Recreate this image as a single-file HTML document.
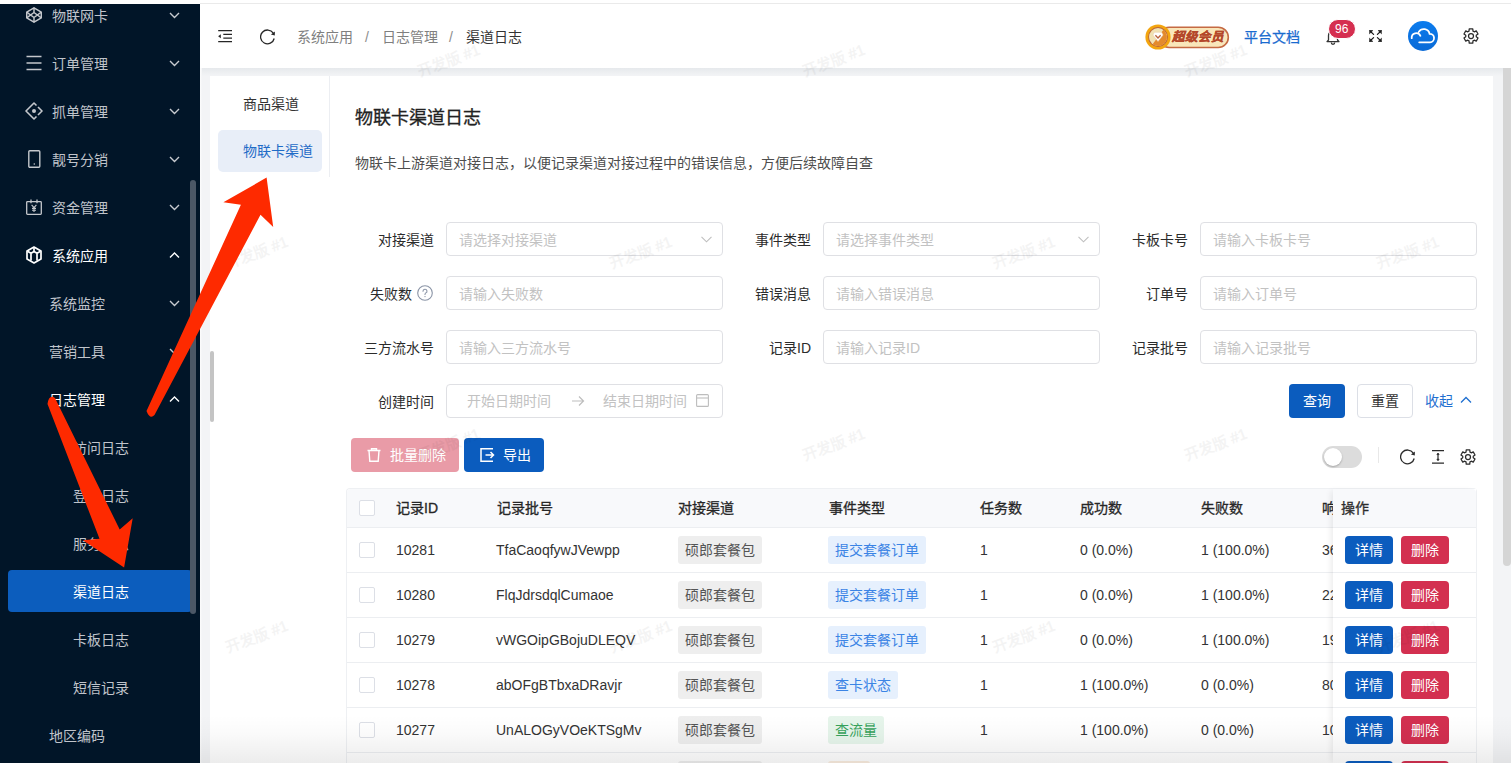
<!DOCTYPE html><html lang="zh-CN"><head><meta charset="utf-8"><style>
*{box-sizing:border-box;margin:0;padding:0}
html,body{width:1511px;height:763px;overflow:hidden;background:#f3f4f6;font-family:"Liberation Sans",sans-serif;font-size:14px;color:#262626}
.abs{position:absolute}
.st{position:absolute;line-height:50px;height:48px;white-space:nowrap;font-size:14px}
.ic{position:absolute}
.lbl{position:absolute;text-align:right;width:100px;line-height:37px;color:#2b2b2b;white-space:nowrap}
.inp{position:absolute;width:277px;height:34px;border:1px solid #dfe0e4;border-radius:4px;background:#fff;color:#c2c2c2;line-height:35px;padding-left:12px;white-space:nowrap}
.btn{position:absolute;border-radius:4px;text-align:center;color:#fff;white-space:nowrap}
.line{position:absolute;left:347px;width:986px;height:1px;background:#ebedf0}
.c{position:absolute;line-height:20px;color:#333;white-space:nowrap}
.cb{position:absolute;left:359px;width:16px;height:16px;border:1px solid #dcdfe6;border-radius:2px;background:#fff}
.tag{position:absolute;height:28px;line-height:28px;padding:0 7px;border-radius:3px;white-space:nowrap}
.tg{background:#eeeeee;color:#555}
.tb{background:#e6f0fd;color:#3b84e5}
.tgr{background:#e6f5eb;color:#37a35c}
.wm{position:absolute;color:#000;opacity:0.045;font-size:15px;transform:rotate(-21deg);-webkit-text-stroke:0.45px #000;white-space:nowrap;width:100px;text-align:center}
</style></head><body>
<div class="abs" style="left:0;top:0;width:1511px;height:4px;background:#fff"></div>
<div class="abs" style="left:200px;top:3px;width:1311px;height:2px;background:linear-gradient(#e6e6e6,#f6f6f6)"></div>
<div class="abs" style="left:0;top:4px;width:200px;height:759px;background:#011528"></div>
<div class="abs" style="left:8px;top:570px;width:184px;height:42px;background:#0c5dbd;border-radius:4px"></div>
<div class="st" style="left:52px;top:-9px;color:#c0c4cb">物联网卡</div>
<svg class="ic" style="left:26px;top:7px" width="16" height="16" viewBox="0 0 16 16" fill="none" stroke="#c4c7cc" stroke-width="1.5" stroke-linejoin="round"><path d="M8 0.8L15.3 5.2V10.8L8 15.2L0.7 10.8V5.2Z"/><path d="M0.7 5.2L8 10.5L15.3 5.2M0.7 10.8L8 5.5L15.3 10.8M8 0.8V5.5M8 10.5V15.2"/></svg>
<svg class="abs" style="left:169px;top:12px" width="11" height="7" viewBox="0 0 11 7" fill="none" stroke="#c8cbd0" stroke-width="1.4"><path d="M1 1L5.5 5.5L10 1"/></svg>
<div class="st" style="left:52px;top:39px;color:#c0c4cb">订单管理</div>
<svg class="ic" style="left:26px;top:55px" width="16" height="16" viewBox="0 0 16 16" fill="none" stroke="#c4c7cc" stroke-width="1.5"><path d="M0.5 1.5H15.5M0.5 8H15.5M0.5 14.5H15.5"/></svg>
<svg class="abs" style="left:169px;top:60px" width="11" height="7" viewBox="0 0 11 7" fill="none" stroke="#c8cbd0" stroke-width="1.4"><path d="M1 1L5.5 5.5L10 1"/></svg>
<div class="st" style="left:52px;top:87px;color:#c0c4cb">抓单管理</div>
<svg class="ic" style="left:25px;top:102px" width="18" height="18" viewBox="0 0 18 18" fill="none" stroke="#c4c7cc" stroke-width="1.6" stroke-linejoin="round"><path d="M11.5 3.5L9 1L1 9L9 17L11.5 14.5M13 5L17 9L13 13"/><circle cx="9" cy="9" r="2" fill="#c4c7cc" stroke="none"/></svg>
<svg class="abs" style="left:169px;top:108px" width="11" height="7" viewBox="0 0 11 7" fill="none" stroke="#c8cbd0" stroke-width="1.4"><path d="M1 1L5.5 5.5L10 1"/></svg>
<div class="st" style="left:52px;top:135px;color:#c0c4cb">靓号分销</div>
<svg class="ic" style="left:28px;top:150px" width="13" height="18" viewBox="0 0 13 18" fill="none" stroke="#c4c7cc" stroke-width="1.4"><rect x="0.8" y="0.8" width="11" height="16.4" rx="1"/><circle cx="6.3" cy="14" r="0.8" fill="#c4c7cc" stroke="none"/></svg>
<svg class="abs" style="left:169px;top:156px" width="11" height="7" viewBox="0 0 11 7" fill="none" stroke="#c8cbd0" stroke-width="1.4"><path d="M1 1L5.5 5.5L10 1"/></svg>
<div class="st" style="left:52px;top:183px;color:#c0c4cb">资金管理</div>
<svg class="ic" style="left:26px;top:199px" width="16" height="16" viewBox="0 0 16 16" fill="none" stroke="#c4c7cc" stroke-width="1.3"><rect x="0.7" y="2.6" width="14.6" height="12.7" rx="0.8"/><path d="M5 0.5V4.2M11 0.5V4.2"/><path d="M5.6 5.8L8 8.6L10.4 5.8M8 8.6V13M6 9.4H10M6 11.2H10" stroke-width="1.1"/></svg>
<svg class="abs" style="left:169px;top:204px" width="11" height="7" viewBox="0 0 11 7" fill="none" stroke="#c8cbd0" stroke-width="1.4"><path d="M1 1L5.5 5.5L10 1"/></svg>
<div class="st" style="left:52px;top:231px;color:#ffffff">系统应用</div>
<svg class="ic" style="left:26px;top:246px" width="16" height="18" viewBox="0 0 16 18" fill="none" stroke="#fff" stroke-width="1.7" stroke-linejoin="round"><path d="M8 1L15 5V13L8 17L1 13V5Z"/><path d="M1.5 5.3L5 7.3V14.5M14.5 5.3L11 7.3V14.5M5 7.3L8 5.5L11 7.3M8 2V5.5"/></svg>
<svg class="abs" style="left:169px;top:252px" width="11" height="7" viewBox="0 0 11 7" fill="none" stroke="#ffffff" stroke-width="1.4"><path d="M1 5.5L5.5 1L10 5.5"/></svg>
<div class="st" style="left:49px;top:279px;color:#c0c4cb">系统监控</div>
<svg class="abs" style="left:169px;top:300px" width="11" height="7" viewBox="0 0 11 7" fill="none" stroke="#c8cbd0" stroke-width="1.4"><path d="M1 1L5.5 5.5L10 1"/></svg>
<div class="st" style="left:49px;top:327px;color:#c0c4cb">营销工具</div>
<svg class="abs" style="left:169px;top:348px" width="11" height="7" viewBox="0 0 11 7" fill="none" stroke="#c8cbd0" stroke-width="1.4"><path d="M1 1L5.5 5.5L10 1"/></svg>
<div class="st" style="left:49px;top:375px;color:#ffffff">日志管理</div>
<svg class="abs" style="left:169px;top:396px" width="11" height="7" viewBox="0 0 11 7" fill="none" stroke="#ffffff" stroke-width="1.4"><path d="M1 5.5L5.5 1L10 5.5"/></svg>
<div class="st" style="left:73px;top:423px;color:#c0c4cb">访问日志</div>
<div class="st" style="left:73px;top:471px;color:#c0c4cb">登录日志</div>
<div class="st" style="left:73px;top:519px;color:#c0c4cb">服务日志</div>
<div class="st" style="left:73px;top:567px;color:#ffffff">渠道日志</div>
<div class="st" style="left:73px;top:615px;color:#c0c4cb">卡板日志</div>
<div class="st" style="left:73px;top:663px;color:#c0c4cb">短信记录</div>
<div class="st" style="left:49px;top:711px;color:#c0c4cb">地区编码</div>
<div class="abs" style="left:190px;top:180px;width:6px;height:434px;background:#4b5766;border-radius:3px"></div>
<div class="abs" style="left:200px;top:4px;width:1311px;height:64px;background:#fff"></div>
<svg class="abs" style="left:218px;top:29px" width="15" height="14" viewBox="0 0 15 14" fill="none" stroke="#262626" stroke-width="1.2"><path d="M0.2 1.6H14M5.3 5.3H14M5.3 9.1H14M0.2 12.6H14"/><path d="M2.8 5.2V9.2L0.1 7.2Z" fill="#262626" stroke="none"/></svg>
<svg class="abs" style="left:260px;top:29px" width="16" height="16" viewBox="0 0 16 16" fill="none" stroke="#262626" stroke-width="1.3"><path d="M13.3 4.2A6.9 6.9 0 1 0 14.2 9.5"/><path d="M14.9 2.4L14.8 6.6L10.9 5.6Z" fill="#262626" stroke="none"/></svg>
<div class="c" style="left:297px;top:26.5px;color:#7f7f7f">系统应用</div>
<div class="c" style="left:365px;top:26.5px;color:#8c8c8c">/</div>
<div class="c" style="left:382px;top:26.5px;color:#7f7f7f">日志管理</div>
<div class="c" style="left:449px;top:26.5px;color:#8c8c8c">/</div>
<div class="c" style="left:466px;top:26.5px;color:#333">渠道日志</div>
<svg class="abs" style="left:1144px;top:23px" width="86" height="28" viewBox="0 0 86 28">
<rect x="15" y="4.2" width="69.3" height="20.3" rx="10.1" fill="#f9e6ba" stroke="#c56a43" stroke-width="1.6"/>
<circle cx="14" cy="14" r="12.6" fill="#f3a50f"/>
<circle cx="14" cy="14" r="9.9" fill="#b9633d"/>
<circle cx="14" cy="14" r="9" fill="#f1e2b4"/>
<path d="M14 5 A9 9 0 0 1 14 23 Z" fill="#e48a2c" transform="rotate(37 14 14)"/>
<path d="M8.9 12L10.3 9.3H17.7L19.1 12L14 18.6Z" fill="#fff" stroke="#e9c9a0" stroke-width="0.5"/>
<path d="M11.4 12.2L14 15L16.6 12.2" fill="none" stroke="#b9633d" stroke-width="1.3"/>
</svg>
<div class="c" style="left:1172px;top:27px;color:#b4472a;font-size:12.5px;font-weight:bold;font-style:italic;letter-spacing:0px;line-height:20px;-webkit-text-stroke:0.3px #b4472a">超级会员</div>
<div class="c" style="left:1244px;top:26.5px;color:#1a6bcf;font-size:14px;-webkit-text-stroke:0.25px #1a6bcf">平台文档</div>
<svg class="abs" style="left:1326px;top:29px" width="14" height="16" viewBox="0 0 14 16" fill="none" stroke="#333" stroke-width="1.3" stroke-linejoin="round"><path d="M2.5 11V6.5A4.5 4.5 0 0 1 11.5 6.5V11L13 12.6H1Z"/><path d="M5.3 13.6A1.7 1.7 0 0 0 8.7 13.6"/></svg>
<div class="abs" style="left:1327.5px;top:18.5px;width:28.5px;height:20px;border-radius:10px;background:#d52f50;border:1px solid #fff;color:#fff;font-size:12px;line-height:18px;text-align:center">96</div>
<svg class="abs" style="left:1368.5px;top:30px" width="13" height="12" viewBox="0 0 13 12"><g fill="#1a1a1a" stroke="#1a1a1a" stroke-width="1.2" stroke-linecap="round"><path d="M1.5 1.5L4.6 4.4M11.5 1.5L8.4 4.4M1.5 10.5L4.6 7.6M11.5 10.5L8.4 7.6"/><path d="M0.3 0.3L3.8 0.6L0.6 3.6ZM12.7 0.3L9.2 0.6L12.4 3.6ZM0.3 11.7L3.8 11.4L0.6 8.4ZM12.7 11.7L9.2 11.4L12.4 8.4Z" stroke-width="0.6" stroke-linejoin="round"/></g></svg>
<svg class="abs" style="left:1408px;top:21px" width="30" height="30" viewBox="0 0 30 30">
<defs><linearGradient id="ag" x1="0" y1="0" x2="0" y2="1"><stop offset="0" stop-color="#0b7cee"/><stop offset="1" stop-color="#0a6ad6"/></linearGradient></defs>
<circle cx="15" cy="15" r="15" fill="url(#ag)"/>
<path d="M3.7 17.2A4.6 4.6 0 0 1 12.4 14.8M10.8 10.9A5.9 5.9 0 0 1 21.6 12.8A4.2 4.2 0 0 1 22 21.3H11.2" fill="none" stroke="#fff" stroke-width="1.8" stroke-linecap="round"/>
</svg>
<svg class="abs" style="left:1462.8px;top:27.8px" width="16" height="16" viewBox="0 0 16 16" fill="none" stroke="#2b2b2b" stroke-width="1.25" stroke-linejoin="round"><path d="M6.01 3.09 L6.23 0.92 L9.77 0.92 L9.99 3.09 L11.26 3.82 L13.25 2.93 L15.02 5.99 L13.25 7.26 L13.25 8.74 L15.02 10.01 L13.25 13.07 L11.26 12.18 L9.99 12.91 L9.77 15.08 L6.23 15.08 L6.01 12.91 L4.74 12.18 L2.75 13.07 L0.98 10.01 L2.75 8.74 L2.75 7.26 L0.98 5.99 L2.75 2.93 L4.74 3.82Z"/><circle cx="8" cy="8" r="2.5"/></svg>
<div class="abs" style="left:200px;top:68px;width:1311px;height:8px;background:linear-gradient(#e6e9ec,#f3f4f6)"></div>
<div class="abs" style="left:200px;top:68px;width:2px;height:695px;background:linear-gradient(90deg,#fdfdfd,#f3f4f6)"></div>
<div class="abs" style="left:210px;top:76px;width:1283px;height:687px;background:#fff"></div>
<div class="abs" style="left:329px;top:76px;width:1px;height:101px;background:#eceef2"></div>
<div class="abs" style="left:1503px;top:68px;width:8px;height:498px;background:#d5d5d5;border-radius:0 0 4px 4px"></div>
<div class="abs" style="left:210px;top:351px;width:4px;height:71px;background:#c4c4c4;border-radius:2px"></div>
<div class="c" style="left:243px;top:94px;color:#333">商品渠道</div>
<div class="abs" style="left:218px;top:130px;width:104px;height:42px;background:#e8eef8;border-radius:5px"></div>
<div class="c" style="left:243px;top:141px;color:#1f6bc7">物联卡渠道</div>
<div class="c" style="left:355px;top:106px;font-size:18px;line-height:24px;-webkit-text-stroke:0.3px #222;color:#222">物联卡渠道日志</div>
<div class="c" style="left:355px;top:153px;color:#4d4d4d">物联卡上游渠道对接日志，以便记录渠道对接过程中的错误信息，方便后续故障自查</div>
<div class="lbl" style="left:334px;top:222px">对接渠道</div>
<div class="inp" style="left:446px;top:222px">请选择对接渠道</div>
<svg class="abs" style="left:701px;top:236px" width="11" height="7" viewBox="0 0 11 7" fill="none" stroke="#bfbfbf" stroke-width="1.1"><path d="M0.5 0.8L5.5 5.8L10.5 0.8"/></svg>
<div class="lbl" style="left:711px;top:222px">事件类型</div>
<div class="inp" style="left:823px;top:222px">请选择事件类型</div>
<svg class="abs" style="left:1078px;top:236px" width="11" height="7" viewBox="0 0 11 7" fill="none" stroke="#bfbfbf" stroke-width="1.1"><path d="M0.5 0.8L5.5 5.8L10.5 0.8"/></svg>
<div class="lbl" style="left:1088px;top:222px">卡板卡号</div>
<div class="inp" style="left:1200px;top:222px">请输入卡板卡号</div>
<div class="lbl" style="left:312px;top:276px">失败数</div>
<svg class="abs" style="left:417px;top:285px" width="16" height="16" viewBox="0 0 16 16" fill="none" stroke="#8a94a6" stroke-width="1.1"><circle cx="8" cy="8" r="7.3"/><path d="M6 6.2A2 2 0 1 1 8.6 8.1C8.1 8.4 8 8.7 8 9.4" stroke-linecap="round"/><circle cx="8" cy="11.6" r="0.7" fill="#8a94a6" stroke="none"/></svg>
<div class="inp" style="left:446px;top:276px">请输入失败数</div>
<div class="lbl" style="left:711px;top:276px">错误消息</div>
<div class="inp" style="left:823px;top:276px">请输入错误消息</div>
<div class="lbl" style="left:1088px;top:276px">订单号</div>
<div class="inp" style="left:1200px;top:276px">请输入订单号</div>
<div class="lbl" style="left:334px;top:330px">三方流水号</div>
<div class="inp" style="left:446px;top:330px">请输入三方流水号</div>
<div class="lbl" style="left:711px;top:330px">记录ID</div>
<div class="inp" style="left:823px;top:330px">请输入记录ID</div>
<div class="lbl" style="left:1088px;top:330px">记录批号</div>
<div class="inp" style="left:1200px;top:330px">请输入记录批号</div>
<div class="lbl" style="left:334px;top:384px">创建时间</div>
<div class="inp" style="left:446px;top:384px;padding-left:0"></div>
<div class="c" style="left:467px;top:391px;color:#c2c2c2">开始日期时间</div>
<svg class="abs" style="left:571px;top:395px" width="14" height="12" viewBox="0 0 14 12" fill="none" stroke="#bdbdbd" stroke-width="1.2"><path d="M1 6H12.5M8 1.5L12.5 6L8 10.5"/></svg>
<div class="c" style="left:603px;top:391px;color:#c2c2c2">结束日期时间</div>
<svg class="abs" style="left:696px;top:394px" width="13" height="13" viewBox="0 0 13 13" fill="none" stroke="#bdbdbd" stroke-width="1.1"><rect x="0.6" y="0.6" width="11.8" height="11.8" rx="1"/><path d="M0.6 4H12.4"/></svg>
<div class="btn" style="left:1289px;top:384px;width:56px;height:34px;line-height:34px;background:#0b5cbe">查询</div>
<div class="btn" style="left:1357px;top:384px;width:56px;height:34px;line-height:32px;background:#fff;border:1px solid #dcdfe6;color:#333">重置</div>
<div class="c" style="left:1425px;top:391px;color:#1f6fd0">收起</div>
<svg class="abs" style="left:1460px;top:396px" width="12" height="8" viewBox="0 0 12 8" fill="none" stroke="#1f6fd0" stroke-width="1.3"><path d="M1 6.5L6 1.5L11 6.5"/></svg>
<div class="btn" style="left:351px;top:438px;width:108px;height:34px;line-height:34px;background:#e99ba7"></div>
<svg class="abs" style="left:367px;top:448px" width="14" height="14" viewBox="0 0 14 14" fill="none" stroke="#fff" stroke-width="1.4"><path d="M0.5 2.5H13.5M4.5 2.5V0.8H9.5V2.5M2 2.5L2.8 13.2H11.2L12 2.5"/></svg>
<div class="c" style="left:390px;top:445px;color:#fff">批量删除</div>
<div class="btn" style="left:464px;top:438px;width:80px;height:34px;background:#0b5cbe"></div>
<svg class="abs" style="left:480px;top:448px" width="15" height="14" viewBox="0 0 15 14" fill="none" stroke="#fff" stroke-width="1.5"><path d="M13 0.8H1V13.2H13M5.5 7H13.5M10.5 4L13.5 7L10.5 10"/></svg>
<div class="c" style="left:503px;top:445px;color:#fff">导出</div>
<div class="abs" style="left:1322px;top:446px;width:40px;height:22px;border-radius:11px;background:#dcdcdc"></div>
<div class="abs" style="left:1324px;top:448px;width:18px;height:18px;border-radius:9px;background:#fff;box-shadow:0 1px 2px rgba(0,0,0,0.25)"></div>
<div class="abs" style="left:1378px;top:447px;width:1px;height:16px;background:#e8e8e8"></div>
<svg class="abs" style="left:1400px;top:449px" width="16" height="16" viewBox="0 0 16 16" fill="none" stroke="#2b2b2b" stroke-width="1.3"><path d="M13.3 4.2A6.9 6.9 0 1 0 14.2 9.5"/><path d="M14.9 2.4L14.8 6.6L10.9 5.6Z" fill="#2b2b2b" stroke="none"/></svg>
<svg class="abs" style="left:1431px;top:449px" width="14" height="16" viewBox="0 0 14 16" fill="none" stroke="#2b2b2b" stroke-width="1.2"><path d="M1 1.6H13M1 14.2H13M7 4.5V11.3"/><path d="M5.9 5.6L7 4.1L8.1 5.6ZM5.9 10.2L7 11.7L8.1 10.2Z" fill="#2b2b2b" stroke-width="0.8"/></svg>
<svg class="abs" style="left:1459.5px;top:448.8px" width="16" height="16" viewBox="0 0 16 16" fill="none" stroke="#2b2b2b" stroke-width="1.25" stroke-linejoin="round"><path d="M6.01 3.09 L6.23 0.92 L9.77 0.92 L9.99 3.09 L11.26 3.82 L13.25 2.93 L15.02 5.99 L13.25 7.26 L13.25 8.74 L15.02 10.01 L13.25 13.07 L11.26 12.18 L9.99 12.91 L9.77 15.08 L6.23 15.08 L6.01 12.91 L4.74 12.18 L2.75 13.07 L0.98 10.01 L2.75 8.74 L2.75 7.26 L0.98 5.99 L2.75 2.93 L4.74 3.82Z"/><circle cx="8" cy="8" r="2.5"/></svg>
<div class="abs" style="left:346px;top:488px;width:1131px;height:275px;border:1px solid #eef0f3;border-bottom:none;border-radius:4px 4px 0 0;background:#fff"></div>
<div class="abs" style="left:347px;top:489px;width:1129px;height:38px;background:#f8f9fb;border-radius:4px 4px 0 0"></div>
<div class="abs" style="left:347px;top:527px;width:1129px;height:1px;background:#eceef1"></div>
<div class="cb" style="top:500px"></div>
<div class="c" style="left:396px;top:498px;-webkit-text-stroke:0.3px #262626;color:#262626">记录ID</div>
<div class="c" style="left:497px;top:498px;-webkit-text-stroke:0.3px #262626;color:#262626">记录批号</div>
<div class="c" style="left:678px;top:498px;-webkit-text-stroke:0.3px #262626;color:#262626">对接渠道</div>
<div class="c" style="left:829px;top:498px;-webkit-text-stroke:0.3px #262626;color:#262626">事件类型</div>
<div class="c" style="left:980px;top:498px;-webkit-text-stroke:0.3px #262626;color:#262626">任务数</div>
<div class="c" style="left:1080px;top:498px;-webkit-text-stroke:0.3px #262626;color:#262626">成功数</div>
<div class="c" style="left:1201px;top:498px;-webkit-text-stroke:0.3px #262626;color:#262626">失败数</div>
<div class="c" style="left:1322px;top:498px;-webkit-text-stroke:0.3px #262626;color:#262626">响应</div>
<div class="cb" style="top:542px"></div>
<div class="c" style="left:396px;top:540px">10281</div>
<div class="c" style="left:496px;top:540px">TfaCaoqfywJVewpp</div>
<div class="tag tg" style="left:678px;top:536px">硕郎套餐包</div>
<div class="tag tb" style="left:828px;top:536px">提交套餐订单</div>
<div class="c" style="left:980px;top:540px">1</div>
<div class="c" style="left:1080px;top:540px">0 (0.0%)</div>
<div class="c" style="left:1201px;top:540px">1 (100.0%)</div>
<div class="c" style="left:1322px;top:540px">36</div>
<div class="abs" style="left:347px;top:572px;width:1129px;height:1px;background:#eceef1"></div>
<div class="cb" style="top:587px"></div>
<div class="c" style="left:396px;top:585px">10280</div>
<div class="c" style="left:496px;top:585px">FlqJdrsdqlCumaoe</div>
<div class="tag tg" style="left:678px;top:581px">硕郎套餐包</div>
<div class="tag tb" style="left:828px;top:581px">提交套餐订单</div>
<div class="c" style="left:980px;top:585px">1</div>
<div class="c" style="left:1080px;top:585px">0 (0.0%)</div>
<div class="c" style="left:1201px;top:585px">1 (100.0%)</div>
<div class="c" style="left:1322px;top:585px">22</div>
<div class="abs" style="left:347px;top:617px;width:1129px;height:1px;background:#eceef1"></div>
<div class="cb" style="top:632px"></div>
<div class="c" style="left:396px;top:630px">10279</div>
<div class="c" style="left:496px;top:630px">vWGOipGBojuDLEQV</div>
<div class="tag tg" style="left:678px;top:626px">硕郎套餐包</div>
<div class="tag tb" style="left:828px;top:626px">提交套餐订单</div>
<div class="c" style="left:980px;top:630px">1</div>
<div class="c" style="left:1080px;top:630px">0 (0.0%)</div>
<div class="c" style="left:1201px;top:630px">1 (100.0%)</div>
<div class="c" style="left:1322px;top:630px">19</div>
<div class="abs" style="left:347px;top:662px;width:1129px;height:1px;background:#eceef1"></div>
<div class="cb" style="top:677px"></div>
<div class="c" style="left:396px;top:675px">10278</div>
<div class="c" style="left:496px;top:675px">abOFgBTbxaDRavjr</div>
<div class="tag tg" style="left:678px;top:671px">硕郎套餐包</div>
<div class="tag tb" style="left:828px;top:671px">查卡状态</div>
<div class="c" style="left:980px;top:675px">1</div>
<div class="c" style="left:1080px;top:675px">1 (100.0%)</div>
<div class="c" style="left:1201px;top:675px">0 (0.0%)</div>
<div class="c" style="left:1322px;top:675px">80</div>
<div class="abs" style="left:347px;top:707px;width:1129px;height:1px;background:#eceef1"></div>
<div class="cb" style="top:722px"></div>
<div class="c" style="left:396px;top:720px">10277</div>
<div class="c" style="left:496px;top:720px">UnALOGyVOeKTSgMv</div>
<div class="tag tg" style="left:678px;top:716px">硕郎套餐包</div>
<div class="tag tgr" style="left:828px;top:716px">查流量</div>
<div class="c" style="left:980px;top:720px">1</div>
<div class="c" style="left:1080px;top:720px">1 (100.0%)</div>
<div class="c" style="left:1201px;top:720px">0 (0.0%)</div>
<div class="c" style="left:1322px;top:720px">10</div>
<div class="abs" style="left:347px;top:752px;width:1129px;height:1px;background:#eceef1"></div>
<div class="cb" style="top:767px"></div>
<div class="tag tg" style="left:678px;top:761px">硕郎套餐包</div>
<div class="tag" style="left:828px;top:761px;background:#fbeee0;color:#e08a3c">续费</div>
<div class="abs" style="left:1333px;top:489px;width:143px;height:274px;background:#fff;box-shadow:-4px 0 6px -2px rgba(0,0,0,0.08)"></div>
<div class="abs" style="left:1333px;top:489px;width:143px;height:38px;background:#f8f9fb;border-radius:0 4px 0 0"></div>
<div class="abs" style="left:1333px;top:527px;width:143px;height:1px;background:#eceef1"></div>
<div class="c" style="left:1341px;top:498px;-webkit-text-stroke:0.3px #262626">操作</div>
<div class="btn" style="left:1345px;top:536px;width:48px;height:28px;line-height:28px;background:#0b5cbe">详情</div>
<div class="btn" style="left:1401px;top:536px;width:48px;height:28px;line-height:28px;background:#d33050">删除</div>
<div class="abs" style="left:1333px;top:572px;width:143px;height:1px;background:#eceef1"></div>
<div class="btn" style="left:1345px;top:581px;width:48px;height:28px;line-height:28px;background:#0b5cbe">详情</div>
<div class="btn" style="left:1401px;top:581px;width:48px;height:28px;line-height:28px;background:#d33050">删除</div>
<div class="abs" style="left:1333px;top:617px;width:143px;height:1px;background:#eceef1"></div>
<div class="btn" style="left:1345px;top:626px;width:48px;height:28px;line-height:28px;background:#0b5cbe">详情</div>
<div class="btn" style="left:1401px;top:626px;width:48px;height:28px;line-height:28px;background:#d33050">删除</div>
<div class="abs" style="left:1333px;top:662px;width:143px;height:1px;background:#eceef1"></div>
<div class="btn" style="left:1345px;top:671px;width:48px;height:28px;line-height:28px;background:#0b5cbe">详情</div>
<div class="btn" style="left:1401px;top:671px;width:48px;height:28px;line-height:28px;background:#d33050">删除</div>
<div class="abs" style="left:1333px;top:707px;width:143px;height:1px;background:#eceef1"></div>
<div class="btn" style="left:1345px;top:716px;width:48px;height:28px;line-height:28px;background:#0b5cbe">详情</div>
<div class="btn" style="left:1401px;top:716px;width:48px;height:28px;line-height:28px;background:#d33050">删除</div>
<div class="abs" style="left:1333px;top:752px;width:143px;height:1px;background:#eceef1"></div>
<div class="btn" style="left:1345px;top:761px;width:48px;height:28px;line-height:28px;background:#0b5cbe">详情</div>
<div class="btn" style="left:1401px;top:761px;width:48px;height:28px;line-height:28px;background:#d33050">删除</div>
<div class="abs" style="left:200px;top:715px;width:1311px;height:48px;background:linear-gradient(rgba(0,0,0,0),rgba(0,0,0,0.02) 40%,rgba(0,0,0,0.075))"></div>
<div class="wm" style="left:398px;top:49px">开发版 #1</div>
<div class="wm" style="left:783px;top:49px">开发版 #1</div>
<div class="wm" style="left:1165px;top:49px">开发版 #1</div>
<div class="wm" style="left:206px;top:241px">开发版 #1</div>
<div class="wm" style="left:590px;top:241px">开发版 #1</div>
<div class="wm" style="left:973px;top:241px">开发版 #1</div>
<div class="wm" style="left:1357px;top:241px">开发版 #1</div>
<div class="wm" style="left:398px;top:433px">开发版 #1</div>
<div class="wm" style="left:783px;top:433px">开发版 #1</div>
<div class="wm" style="left:1165px;top:433px">开发版 #1</div>
<div class="wm" style="left:206px;top:625px">开发版 #1</div>
<div class="wm" style="left:590px;top:625px">开发版 #1</div>
<div class="wm" style="left:973px;top:625px">开发版 #1</div>
<div class="wm" style="left:1357px;top:625px">开发版 #1</div>
<svg class="abs" style="left:0;top:0" width="1511" height="763" viewBox="0 0 1511 763">
<path d="M146.5 411 L240.9 204.8 L223.4 202.2 L266.6 177.6 L273.2 226.9 L260.5 214.8 L154.5 415 Q150 420 146.5 411 Z" fill="#fe2a00"/>
<path d="M47.5 404 L99.5 538.8 L82.8 540.3 L124.1 567.4 L132.7 518.2 L119.7 529.5 L55 398 Q49 394 47.5 404 Z" fill="#fe2a00"/>
</svg>
</body></html>
